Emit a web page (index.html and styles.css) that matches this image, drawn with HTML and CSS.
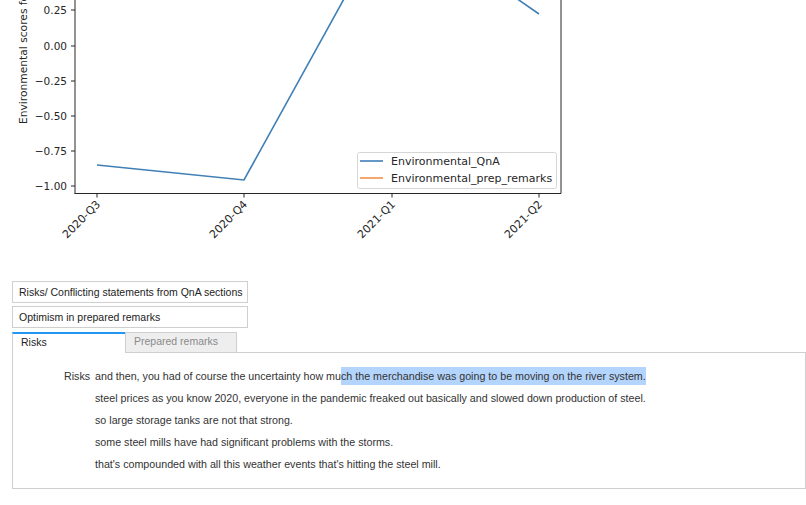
FILE: index.html
```html
<!DOCTYPE html>
<html>
<head>
<meta charset="utf-8">
<link rel="stylesheet" href="styles.css">
</head>
<body>
<svg class="chart" width="806" height="276" viewBox="0 0 806 276">
  <g class="ylabel">
    <text x="27" y="124" transform="rotate(-90 27 124)">Environmental scores for QnA</text>
  </g>
  <g class="axes">
    <line x1="75" y1="0" x2="75" y2="193.5"/>
    <line x1="74.5" y1="193.5" x2="561" y2="193.5"/>
    <line x1="561" y1="0" x2="561" y2="193.5"/>
  </g>
  <g class="ticks">
    <line x1="71" y1="10" x2="75" y2="10"/>
    <line x1="71" y1="46" x2="75" y2="46"/>
    <line x1="71" y1="81" x2="75" y2="81"/>
    <line x1="71" y1="116" x2="75" y2="116"/>
    <line x1="71" y1="151" x2="75" y2="151"/>
    <line x1="71" y1="186" x2="75" y2="186"/>
    <line x1="97" y1="193.5" x2="97" y2="197.5"/>
    <line x1="244" y1="193.5" x2="244" y2="197.5"/>
    <line x1="392" y1="193.5" x2="392" y2="197.5"/>
    <line x1="539" y1="193.5" x2="539" y2="197.5"/>
  </g>
  <g class="yticks">
    <text x="67" y="14">0.25</text>
    <text x="67" y="50">0.00</text>
    <text x="67" y="85">−0.25</text>
    <text x="67" y="120">−0.50</text>
    <text x="67" y="155">−0.75</text>
    <text x="67" y="190">−1.00</text>
  </g>
  <g class="xticks">
    <text x="101" y="205" transform="rotate(-45 101 205)">2020-Q3</text>
    <text x="248" y="205" transform="rotate(-45 248 205)">2020-Q4</text>
    <text x="396" y="205" transform="rotate(-45 396 205)">2021-Q1</text>
    <text x="543" y="205" transform="rotate(-45 543 205)">2021-Q2</text>
  </g>
  <polyline class="series-blue" points="97,165 244,180 392,-88 539,14"/>
  <g class="legend">
    <rect x="357.5" y="152.5" width="199" height="36" rx="2" ry="2"/>
    <line class="series-blue" x1="360" y1="161" x2="383" y2="161"/>
    <line class="series-orange" x1="360" y1="178" x2="383" y2="178"/>
    <text x="391" y="165">Environmental_QnA</text>
    <text x="391" y="182">Environmental_prep_remarks</text>
  </g>
</svg>
<div class="widgets">
  <div class="btn">Risks/ Conflicting statements from QnA sections</div>
  <div class="btn">Optimism in prepared remarks</div>
  <div class="tabs">
    <div class="tab active">Risks</div>
    <div class="tab">Prepared remarks</div>
    <div class="tab-fill"></div>
  </div>
  <div class="panel">
    <div class="label">Risks</div>
    <div class="lines">
      <div class="line">and then, you had of course the uncertainty how mu<span class="sel">ch the merchandise was going to be moving on the river system.</span></div>
      <div class="line">steel prices as you know 2020, everyone in the pandemic freaked out basically and slowed down production of steel.</div>
      <div class="line">so large storage tanks are not that strong.</div>
      <div class="line">some steel mills have had significant problems with the storms.</div>
      <div class="line">that's compounded with all this weather events that's hitting the steel mill.</div>
    </div>
  </div>
</div>
</body>
</html>
```
FILE: styles.css
```css
html, body {
  margin: 0;
  padding: 0;
  background: #ffffff;
}
body {
  width: 806px;
  height: 505px;
  overflow: hidden;
  font-family: "Liberation Sans", Arial, sans-serif;
}
.chart {
  display: block;
  font-family: "DejaVu Sans", sans-serif;
  font-size: 10.5px;
  fill: #262626;
}
.axes line, .ticks line {
  stroke: #262626;
  stroke-width: 1;
}
.yticks text {
  text-anchor: end;
}
.xticks text {
  text-anchor: end;
  font-size: 11px;
}
.ylabel text {
  text-anchor: start;
  font-size: 10.7px;
}
.series-blue {
  fill: none;
  stroke: #3f7fb6;
  stroke-width: 1.6;
}
.series-orange {
  fill: none;
  stroke: #f7904c;
  stroke-width: 1.6;
}
.legend rect {
  fill: #ffffff;
  stroke: #d6d6d6;
  stroke-width: 1;
}
.legend text {
  font-size: 11px;
}
.widgets {
  padding-left: 12px;
  margin-top: 5px;
  display: flex;
  flex-direction: column;
}
.btn {
  box-sizing: border-box;
  width: 236px;
  height: 22px;
  border: 1px solid #cfcfcf;
  padding-left: 6px;
  font-size: 10.5px;
  line-height: 20px;
  color: #222;
  margin-bottom: 3px;
}
.tabs {
  display: flex;
  height: 21px;
  margin-top: 1px;
}
.tab {
  box-sizing: border-box;
  width: 112px;
  height: 21px;
  border: 1px solid #cfcfcf;
  background: #eeeeee;
  color: #8a8a8a;
  font-size: 10.5px;
  line-height: 17px;
  padding-left: 8px;
}
.tab.active {
  width: 113px;
  background: #ffffff;
  color: #222;
  border-top: 2px solid #2196f3;
  border-bottom: none;
  border-right: none;
  line-height: 16px;
}
.tab-fill {
  flex: 1;
  border-bottom: 1px solid #cfcfcf;
}
.panel {
  box-sizing: border-box;
  width: 794px;
  height: 136px;
  border: 1px solid #cfcfcf;
  border-top: none;
  padding: 12px 0 0 51px;
  display: flex;
  font-size: 10.7px;
  color: #333;
}
.label {
  width: 31px;
  line-height: 22px;
}
.line {
  line-height: 22px;
  white-space: nowrap;
}
.sel {
  background: #b3d4fc;
  padding: 3px 0;
}
```
